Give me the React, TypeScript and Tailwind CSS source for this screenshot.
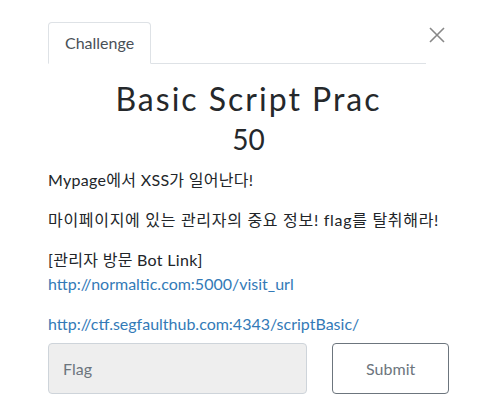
export default function App() {
  return (
    <div className="w-[495px] h-[419px] bg-white font-['Lato','Noto_Sans_CJK_KR',sans-serif] text-[#212529] overflow-hidden">
      <div className="pl-[48px] pr-[46px] pt-[22px]">
        {/* Tabs + close */}
        <div className="flex items-start">
          <div className="flex-1 flex border-b border-[#dee2e6] mr-[3px]">
            <div className="-mb-px px-4 py-2 leading-6 text-base text-[#495057] bg-white border border-[#dee2e6] border-b-white rounded-t-[4px]">
              Challenge
            </div>
          </div>
          <button className="mt-[5px] mr-[4px] w-[16px] h-[16px] text-[#888888]" aria-label="Close">
            <svg viewBox="0 0 16 16" className="w-[16px] h-[16px]" fill="none" stroke="currentColor" strokeWidth="1.6">
              <path d="M1 1 L15 15 M15 1 L1 15" />
            </svg>
          </button>
        </div>

        {/* Title */}
        <h2 className="mt-[16px] text-center text-[32px] leading-[38px] font-normal tracking-[2px] text-[#25282b]">Basic Script Prac</h2>
        <h3 className="mt-[4px] text-center text-[28px] leading-[34px] font-normal text-[#25282b]">50</h3>

        {/* Description */}
        <div className="mt-[12px] text-base leading-6">
          <p className="mb-4 tracking-[0.3px]">Mypage에서 XSS가 일어난다!</p>
          <p className="mb-4 tracking-[0.7px]">마이페이지에 있는 관리자의 중요 정보! flag를 탈취해라!</p>
          <p className="mb-4">
            <span className="tracking-[0.3px]">[관리자 방문 Bot Link]</span>
            <br />
            <a className="text-[#337ab7]" href="#">http://normaltic.com:5000/visit_url</a>
          </p>
          <p className="mb-[7px]">
            <a className="text-[#337ab7]" href="#">http://ctf.segfaulthub.com:4343/scriptBasic/</a>
          </p>
        </div>

        {/* Submit row */}
        <div className="flex gap-[25px]">
          <input
            className="w-[260px] h-[51px] px-[14px] bg-[#eeeeee] border border-[#ced4da] rounded-[4px] text-base placeholder:text-[#6c757d] outline-none"
            placeholder="Flag"
          />
          <button className="w-[117px] h-[51px] border border-[#6c757d] rounded-[4px] text-base text-[#6c757d] bg-white">
            Submit
          </button>
        </div>
      </div>
    </div>
  );
}
